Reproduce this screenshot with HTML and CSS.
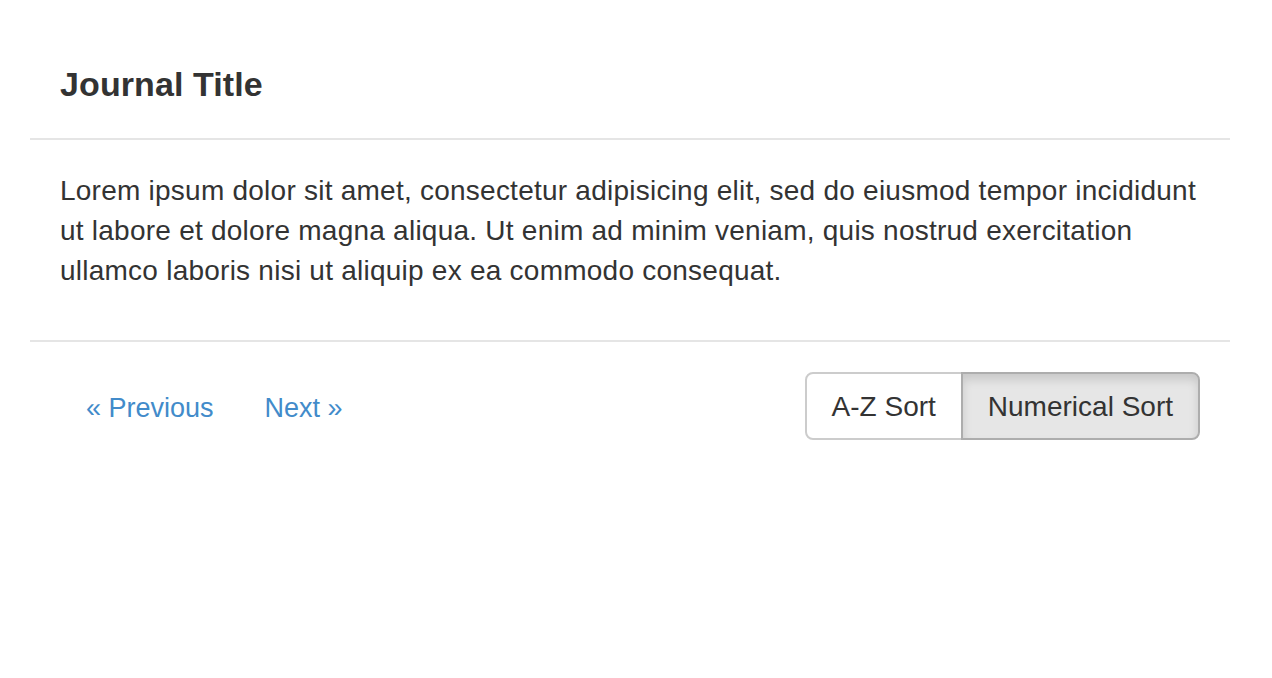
FILE: index.html
```html
<!DOCTYPE html>
<html>
<head>
<meta charset="utf-8">
<link rel="stylesheet" href="styles.css">
</head>
<body>
<div class="panel">
  <div class="panel-header">
    <h4 class="panel-title">Journal Title</h4>
  </div>
  <div class="panel-body">
    <p>Lorem ipsum dolor sit amet, consectetur adipisicing elit, sed do eiusmod tempor incididunt ut labore et dolore magna aliqua. Ut enim ad minim veniam, quis nostrud exercitation ullamco laboris nisi ut aliquip ex ea commodo consequat.</p>
  </div>
  <div class="panel-footer">
    <ul class="pager">
      <li><a href="#">&laquo; Previous</a></li>
      <li><a href="#">Next &raquo;</a></li>
    </ul>
    <div class="btn-group">
      <button class="btn">A-Z Sort</button>
      <button class="btn active">Numerical Sort</button>
    </div>
  </div>
</div>
</body>
</html>
```
FILE: styles.css
```css
* { box-sizing: border-box; }
html, body { margin: 0; padding: 0; background: #fff; }
body {
  font-family: "Liberation Sans", Arial, Helvetica, sans-serif;
  font-size: 28px;
  line-height: 40px;
  color: #333;
}
.panel {
  margin: 0 42px 0 30px;
  padding-top: 28px;
}
.panel-header {
  padding: 30px 30px 28px;
  border-bottom: 2px solid #e5e5e5;
}
.panel-title {
  margin: 0;
  font-size: 34px;
  line-height: 52px;
  font-weight: bold;
  color: #333;
  letter-spacing: 0.1px;
}
.panel-body {
  padding: 31px 30px 30px;
}
.panel-body p {
  margin: 0 0 19px;
  letter-spacing: 0.24px;
}
.panel-footer {
  border-top: 2px solid #e5e5e5;
  padding: 30px;
  display: flex;
  justify-content: space-between;
  align-items: center;
}
.pager {
  list-style: none;
  margin: 0;
  padding: 0;
  display: flex;
  gap: 0;
}
.pager a {
  display: block;
  padding: 12px 25px 8px 26px;
  font-size: 27px;
  color: #428bca;
  text-decoration: none;
}
.btn-group {
  display: flex;
}
.btn {
  font-family: inherit;
  font-size: 28px;
  line-height: 40px;
  color: #333;
  background: #fff;
  border: 2px solid #ccc;
  padding: 13px 25px 11px;
  margin: 0;
  cursor: pointer;
}
.btn:first-child {
  border-radius: 8px 0 0 8px;
}
.btn:last-child {
  border-radius: 0 8px 8px 0;
  margin-left: -2px;
}
.btn.active {
  background: #e6e6e6;
  border-color: #adadad;
  box-shadow: inset 0 6px 10px rgba(0,0,0,0.125);
}
```
